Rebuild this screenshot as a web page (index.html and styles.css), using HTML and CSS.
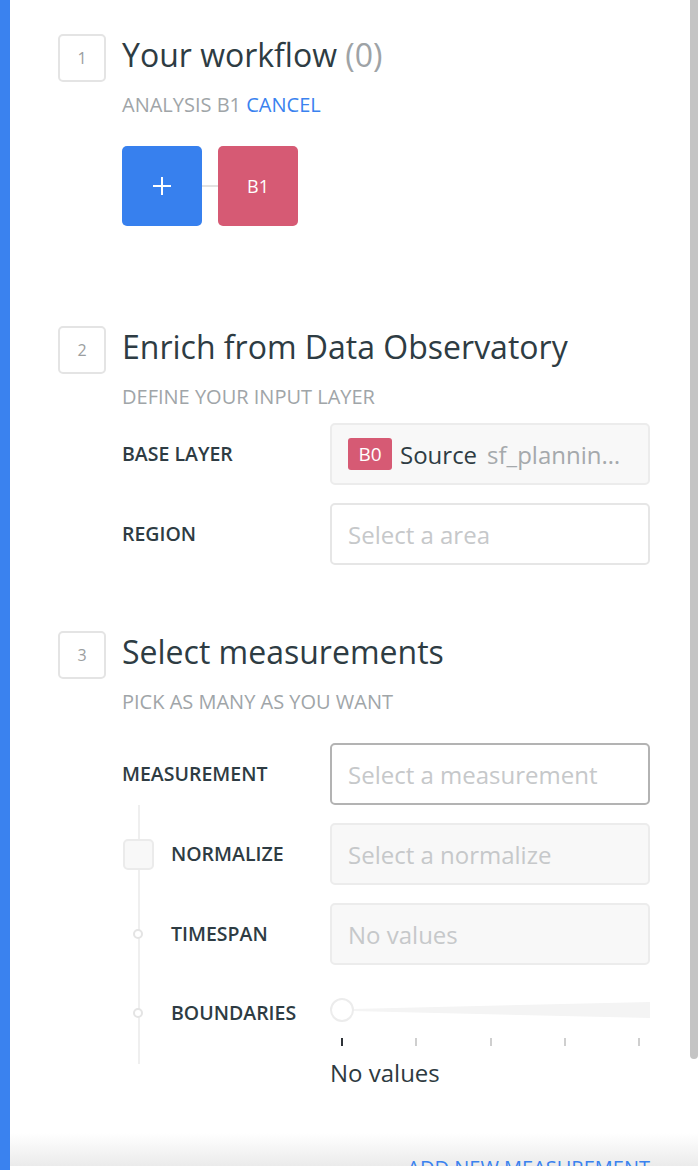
FILE: index.html
```html
<!DOCTYPE html>
<html lang="en">
<head>
<meta charset="utf-8">
<title>Enrich from Data Observatory</title>
<link rel="stylesheet" href="styles.css">
</head>
<body>
<div class="panel">
  <div class="scroll">
    <section class="step step-first">
      <div class="step-num">1</div>
      <div class="step-body">
        <h2 class="step-title">Your workflow <span class="count">(0)</span></h2>
        <p class="step-sub">ANALYSIS B1 <a class="link" href="#">CANCEL</a></p>
        <div class="workflow">
          <button class="node node-add" aria-label="Add analysis">
            <svg width="20" height="20" viewBox="0 0 20 20"><path d="M10 1v18M1 10h18" stroke="#fff" stroke-width="2" fill="none"/></svg>
          </button>
          <span class="node-link"></span>
          <button class="node node-layer">B1</button>
        </div>
      </div>
    </section>

    <section class="step">
      <div class="step-num">2</div>
      <div class="step-body">
        <h2 class="step-title">Enrich from Data Observatory</h2>
        <p class="step-sub">DEFINE YOUR INPUT LAYER</p>
        <div class="fields fields-input">
          <div class="row">
            <span class="label">BASE LAYER</span>
            <div class="input input-muted">
              <span class="badge">B0</span>
              <span class="value">Source</span>
              <span class="value-muted">sf_plannin…</span>
            </div>
          </div>
          <div class="row">
            <span class="label">REGION</span>
            <div class="input"><span class="placeholder">Select a area</span></div>
          </div>
        </div>
      </div>
    </section>

    <section class="step">
      <div class="step-num">3</div>
      <div class="step-body">
        <h2 class="step-title">Select measurements</h2>
        <p class="step-sub">PICK AS MANY AS YOU WANT</p>
        <div class="fields fields-measure">
          <div class="row">
            <span class="label">MEASUREMENT</span>
            <div class="input input-focus"><span class="placeholder">Select a measurement</span></div>
          </div>
          <div class="sub">
            <div class="sub-row">
              <span class="marker"><span class="checkbox"></span></span>
              <span class="label sub-label">NORMALIZE</span>
              <div class="input input-muted"><span class="placeholder">Select a normalize</span></div>
            </div>
            <div class="sub-row">
              <span class="marker"><span class="dot"></span></span>
              <span class="label sub-label">TIMESPAN</span>
              <div class="input input-muted"><span class="placeholder">No values</span></div>
            </div>
            <div class="sub-row sub-row-top">
              <span class="marker marker-top"><span class="dot"></span></span>
              <span class="label sub-label label-top">BOUNDARIES</span>
              <div class="range">
                <div class="slider">
                  <span class="track"></span>
                  <span class="knob"></span>
                </div>
                <div class="ticks">
                  <span class="tick tick-on"></span>
                  <span class="tick"></span>
                  <span class="tick"></span>
                  <span class="tick"></span>
                  <span class="tick"></span>
                </div>
                <p class="range-value">No values</p>
              </div>
            </div>
          </div>
        </div>
      </div>
    </section>
  </div>
  <footer class="footer">
    <a class="footer-link" href="#">ADD NEW MEASUREMENT</a>
  </footer>
  <div class="scrollbar"></div>
</div>
</body>
</html>
```

FILE: styles.css
```css
* {
  box-sizing: border-box;
}

html, body {
  margin: 0;
  padding: 0;
  background: #fff;
}

body {
  font-family: "Open Sans", "Noto Sans", sans-serif;
  color: #2e3c43;
}

.panel {
  position: relative;
  height: 1170px;
  border-left: 10px solid #3a82ef;
  display: flex;
  flex-direction: column;
  overflow: hidden;
}

.scroll {
  flex: 1;
  overflow: hidden;
  padding: 0 48px;
}

/* numbered steps */
.step {
  display: grid;
  grid-template-columns: 48px 1fr;
  column-gap: 16px;
}

.step-first {
  padding-top: 34px;
}

.step + .step {
  margin-top: 100px;
}

.step:last-child {
  margin-top: 66px;
}

.step-num {
  width: 48px;
  height: 48px;
  border: 2px solid #e4e4e4;
  border-radius: 5px;
  display: flex;
  align-items: center;
  justify-content: center;
  font-size: 16px;
  color: #9b9ea0;
}

.step-title {
  margin: 0;
  font-size: 32px;
  font-weight: 400;
  line-height: 42px;
  color: #2e3c43;
}

.count {
  color: #9ea3a6;
}

.step-sub {
  margin: 17px 0 0;
  font-size: 20px;
  line-height: 24px;
  color: #a0a5a8;
}

.link {
  color: #3a82ef;
  text-decoration: none;
}

/* workflow nodes */
.workflow {
  display: flex;
  align-items: center;
  margin-top: 29px;
}

.node {
  width: 80px;
  height: 80px;
  border: 0;
  border-radius: 5px;
  padding: 0;
  display: flex;
  align-items: center;
  justify-content: center;
  font-family: inherit;
  font-size: 18px;
  color: #fff;
}

.node-add {
  background: #3780ee;
}

.node-layer {
  background: #d65a74;
}

.node-link {
  width: 16px;
  height: 2px;
  background: #e2e2e2;
}

/* form rows */
.fields {
  display: flex;
  flex-direction: column;
  gap: 18px;
}

.fields-input {
  margin-top: 14px;
}

.fields-measure {
  margin-top: 29px;
}

.row {
  display: grid;
  grid-template-columns: 208px 320px;
  align-items: center;
}

.label {
  font-size: 19.5px;
  font-weight: 600;
  line-height: 24px;
  color: #2e3c43;
}

.input {
  height: 62px;
  border: 2px solid #e6e6e6;
  border-radius: 5px;
  background: #fff;
  display: flex;
  align-items: center;
  padding: 0 16px;
  font-size: 24px;
  white-space: nowrap;
  overflow: hidden;
}

.input-muted {
  background: #f8f8f8;
  border-color: #ececec;
}

.input-focus {
  border-color: #b3b3b3;
}

.placeholder {
  color: #c6c8ca;
}

.badge {
  width: 44px;
  height: 32px;
  border-radius: 3px;
  background: #d65a74;
  color: #fff;
  font-size: 19px;
  display: flex;
  align-items: center;
  justify-content: center;
  flex: none;
}

.value {
  margin-left: 8px;
  color: #2e3c43;
}

.value-muted {
  margin-left: 10px;
  color: #a5a9ac;
}

/* measurement options */
.sub {
  position: relative;
  display: flex;
  flex-direction: column;
  gap: 18px;
}

.sub::before {
  content: "";
  position: absolute;
  left: 16px;
  top: -18px;
  bottom: 24px;
  width: 2px;
  background: #efefef;
}

.sub-row {
  position: relative;
  display: grid;
  grid-template-columns: 32px 176px 320px;
  align-items: center;
}

.sub-row-top {
  align-items: start;
}

.marker {
  display: flex;
  justify-content: center;
  align-items: center;
}

.marker-top {
  margin-top: 25px;
}

.sub-label {
  padding-left: 17px;
}

.label-top {
  margin-top: 18px;
}

.checkbox {
  width: 31px;
  height: 31px;
  border: 2px solid #ebebeb;
  border-radius: 5px;
  background: #f8f8f8;
}

.dot {
  width: 10px;
  height: 10px;
  border: 2px solid #e4e4e4;
  border-radius: 50%;
  background: #fff;
}

/* range slider */
.range {
  padding-top: 15px;
}

.slider {
  position: relative;
  height: 24px;
}

.track {
  position: absolute;
  left: 12px;
  right: 0;
  top: 4px;
  height: 16px;
  background: #f4f4f4;
  clip-path: polygon(0 45%, 100% 0, 100% 100%, 0 55%);
}

.knob {
  position: absolute;
  left: 0;
  top: 0;
  width: 24px;
  height: 24px;
  border: 2px solid #ececec;
  border-radius: 50%;
  background: #fff;
}

.ticks {
  display: flex;
  justify-content: space-between;
  padding: 0 10px 0 11px;
  margin-top: 16px;
}

.tick {
  width: 2px;
  height: 8px;
  background: #cfcfcf;
}

.tick-on {
  background: #2e3338;
}

.range-value {
  margin: 12px 0 0;
  font-size: 24px;
  line-height: 30px;
  color: #2e3a40;
}

/* footer */
.footer {
  flex: none;
  height: 33px;
  margin-bottom: 4px;
  padding: 23px 48px 0 0;
  overflow: hidden;
  text-align: right;
  background: linear-gradient(#ffffff, #ebebeb);
}

.footer-link {
  display: inline-block;
  font-size: 20px;
  line-height: 24px;
  color: #3a82ef;
  text-decoration: none;
}

.scrollbar {
  position: absolute;
  top: -6px;
  right: 0;
  width: 8px;
  height: 1065px;
  border-radius: 4px;
  background: #c4c4c4;
}
```
